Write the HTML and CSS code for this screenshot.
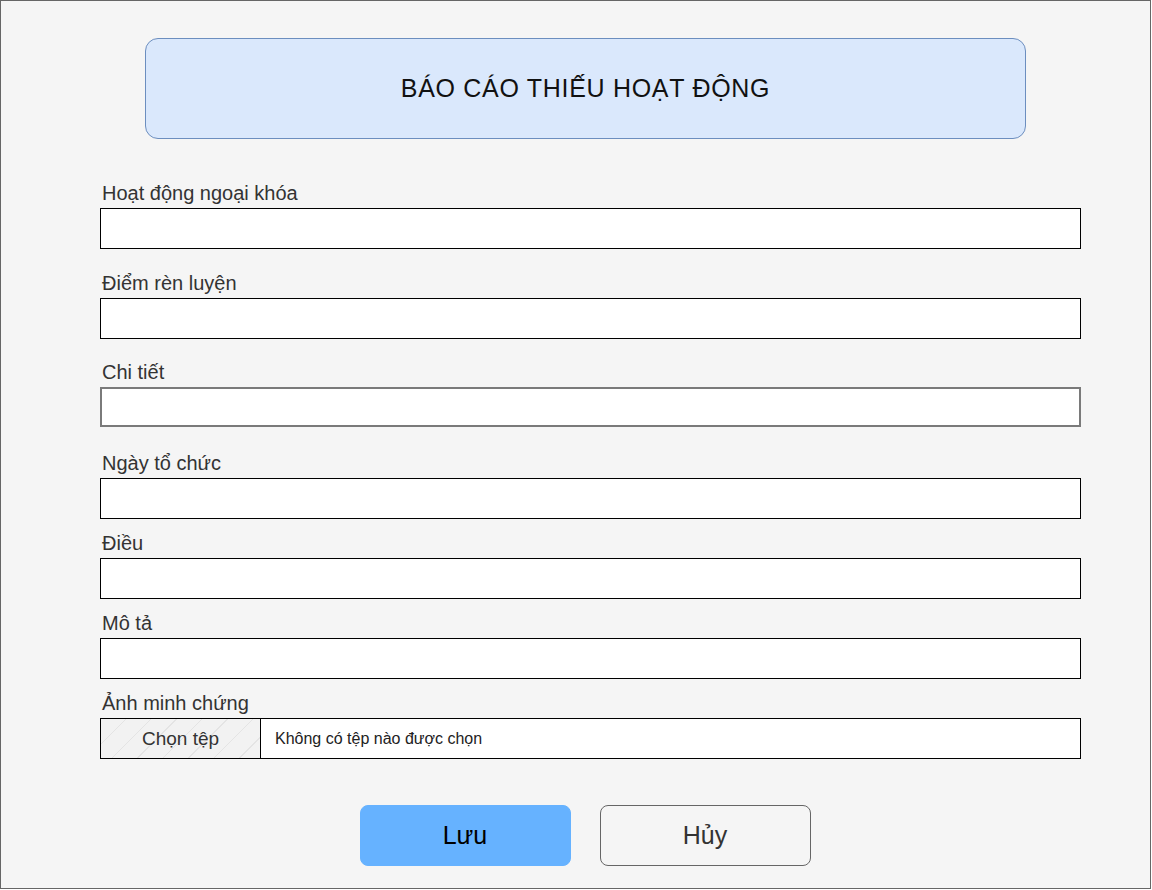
FILE: index.html
```html
<!DOCTYPE html>
<html lang="vi">
<head>
<meta charset="utf-8">
<title>Báo cáo thiếu hoạt động</title>
<link rel="stylesheet" href="styles.css">
</head>
<body>
<div class="frame">
  <div class="header">BÁO CÁO THIẾU HOẠT ĐỘNG</div>
  <form class="form">
    <div class="field">
      <label class="label">Hoạt động ngoại khóa</label>
      <div class="input"></div>
    </div>
    <div class="field field--gap23">
      <label class="label">Điểm rèn luyện</label>
      <div class="input"></div>
    </div>
    <div class="field field--gap22">
      <label class="label">Chi tiết</label>
      <div class="input input--gray"></div>
    </div>
    <div class="field field--gap25">
      <label class="label">Ngày tổ chức</label>
      <div class="input"></div>
    </div>
    <div class="field field--gap13">
      <label class="label">Điều</label>
      <div class="input"></div>
    </div>
    <div class="field field--gap13">
      <label class="label">Mô tả</label>
      <div class="input"></div>
    </div>
    <div class="field field--gap13">
      <label class="label">Ảnh minh chứng</label>
      <div class="input file">
        <span class="file-btn">Chọn tệp</span>
        <span class="file-name">Không có tệp nào được chọn</span>
      </div>
    </div>
  </form>
  <div class="actions">
    <button class="btn btn--primary" type="button">Lưu</button>
    <button class="btn btn--ghost" type="button">Hủy</button>
  </div>
</div>
</body>
</html>
```
FILE: styles.css
```css
html, body {
  margin: 0;
  padding: 0;
  background: #ffffff;
}
body {
  font-family: "Liberation Sans", Arial, sans-serif;
}
.frame {
  box-sizing: border-box;
  width: 1151px;
  height: 889px;
  border: 1px solid #666666;
  background: #f5f5f5;
  padding-top: 37px;
}
.header {
  box-sizing: border-box;
  margin-left: 144px;
  width: 881px;
  height: 101px;
  border: 1px solid #6c8ebf;
  border-radius: 13px;
  background: #dae8fc;
  display: flex;
  align-items: center;
  justify-content: center;
  font-size: 25px;
  letter-spacing: 0.7px;
  color: #111111;
}
.form {
  margin-left: 99px;
  width: 981px;
  margin-top: 43px;
  display: flex;
  flex-direction: column;
}
.field {
  display: flex;
  flex-direction: column;
}
.field--gap23 { margin-top: 23px; }
.field--gap22 { margin-top: 22px; }
.field--gap25 { margin-top: 25px; }
.field--gap13 { margin-top: 13px; }
.label {
  font-size: 20px;
  line-height: 22px;
  color: #333333;
  padding-left: 2px;
  margin-bottom: 4px;
}
.input {
  box-sizing: border-box;
  height: 41px;
  border: 1px solid #000000;
  background: #ffffff;
}
.input--gray {
  border: 2px solid #7a7a7a;
  height: 40px;
}
.file {
  display: flex;
  align-items: stretch;
}
.file-btn {
  box-sizing: border-box;
  width: 160px;
  border-right: 1px solid #000000;
  background: repeating-linear-gradient(135deg, #f2f2f2 0, #f2f2f2 17px, #e4e4e4 17px, #e4e4e4 18px);
  display: flex;
  align-items: center;
  justify-content: center;
  font-size: 19px;
  color: #333333;
}
.file-name {
  display: flex;
  align-items: center;
  padding-left: 14px;
  font-size: 16px;
  color: #222222;
}
.actions {
  display: flex;
  justify-content: center;
  gap: 29px;
  margin-top: 46px;
  margin-left: 19px;
}
.btn {
  box-sizing: border-box;
  width: 211px;
  height: 61px;
  border-radius: 8px;
  font-family: "Liberation Sans", Arial, sans-serif;
  font-size: 25px;
  padding: 0;
  cursor: pointer;
}
.btn--primary {
  background: #66b2ff;
  border: 1px solid #66b2ff;
  color: #000000;
}
.btn--ghost {
  background: #f5f5f5;
  border: 1px solid #666666;
  color: #333333;
}
```
